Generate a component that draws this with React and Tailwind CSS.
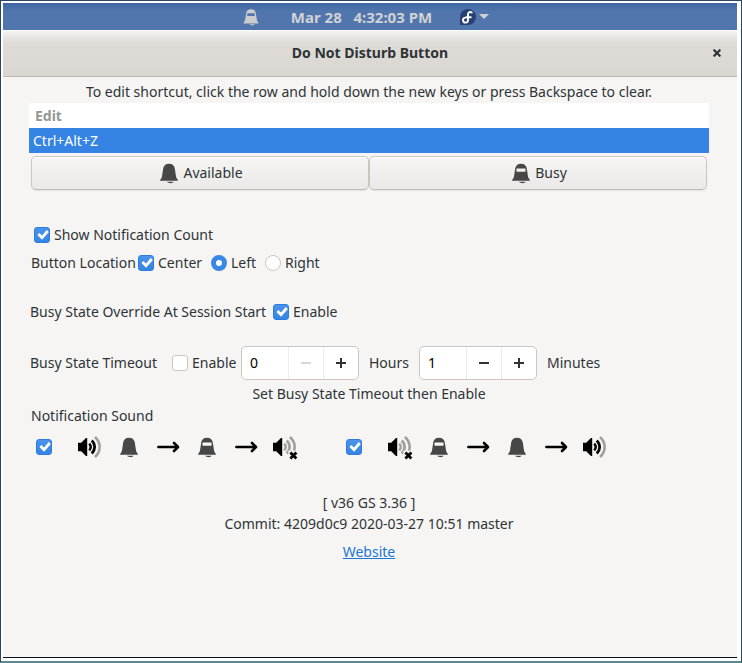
import { useState } from 'react';

function Bell({ busy = false, className = 'size-6 text-[#474747]' }) {
  return (
    <svg viewBox="0 0 24 24" className={className + ' shrink-0'} fill="currentColor" aria-hidden="true">
      <path
        fillRule="evenodd"
        d={
          'M12 2.8C8.6 2.8 6.8 4.6 6.2 7.6L5 15.4C4.7 17 3.2 18.2 3 19.8H21C20.8 18.2 19.3 17 19 15.4L17.8 7.6C17.2 4.6 15.4 2.8 12 2.8Z' +
          (busy ? 'M8.2 7.4H15.8C16.3 7.4 16.6 7.7 16.6 8.1V10C16.6 10.4 16.3 10.7 15.8 10.7H8.2C7.7 10.7 7.4 10.4 7.4 10V8.1C7.4 7.7 7.7 7.4 8.2 7.4Z' : '')
        }
      />
      <path d="M9.8 20.8H16.6C16 21.7 15.2 22.2 14 22.2C12.2 22.2 10.6 21.7 9.8 20.8Z" />
    </svg>
  );
}

function Arrow() {
  return (
    <svg viewBox="0 0 24 24" className="size-6 shrink-0" fill="none" stroke="#000" strokeWidth="2.6" aria-hidden="true">
      <path d="M2.4 12H21" strokeLinecap="round" />
      <path d="M18 8L22 12L18 16" strokeLinecap="round" strokeLinejoin="round" />
    </svg>
  );
}

function Speaker({ muted = false }) {
  const near = muted ? '#9f9f9f' : '#000';
  return (
    <svg viewBox="0 0 24 24" className="size-6 shrink-0 overflow-visible" fill="none" aria-hidden="true">
      <path d="M0 7.8H3.2L8 3H9.2V21H8L3.2 16.2H0Z" fill="#000" />
      <path d="M11.2 8.6C13 10.6 13 13.4 11.2 15.4" stroke={near} strokeWidth="2.4" />
      <path d="M13.8 5.6C17.6 9.4 17.6 14.6 13.8 18.4" stroke={near} strokeWidth="2.8" />
      <path d="M17 2C23.2 7.6 23.2 16.4 17 22" stroke="#9f9f9f" strokeWidth="2.6" />
      {muted && (
        <>
          <path d="M15.4 15.6H24.6V24H15.4Z" fill="#f6f5f4" />
          <path d="M17.4 17.4L23.4 23.4M23.4 17.4L17.4 23.4" stroke="#000" strokeWidth="2.8" />
        </>
      )}
    </svg>
  );
}

function Check({ className = '', ...props }) {
  return (
    <span className={'grid size-4 shrink-0 ' + className}>
      <input
        type="checkbox"
        className="peer col-start-1 row-start-1 size-4 appearance-none rounded-[3px] border border-[#cdc7c2] bg-white checked:border-[#2b7be0] checked:bg-linear-to-b checked:from-[#4a93ea] checked:to-[#3584e4]"
        {...props}
      />
      <svg viewBox="0 0 16 16" className="pointer-events-none col-start-1 row-start-1 hidden size-4 peer-checked:block" fill="none" stroke="#fff" strokeWidth="2.8" aria-hidden="true">
        <path d="M4.4 7L8 10.6L13.8 4" />
      </svg>
    </span>
  );
}

function Radio(props) {
  return (
    <input
      type="radio"
      name="location"
      className="size-4 shrink-0 appearance-none rounded-full border border-[#cdc7c2] bg-white checked:border-[5px] checked:border-[#3987e5]"
      {...props}
    />
  );
}

function Spin({ label, initial }) {
  const [value, setValue] = useState(initial);
  return (
    <div className="flex h-[34px] w-[118px] shrink-0 overflow-hidden rounded-[5px] border border-[#cdc7c2] bg-white text-[#2e3436]">
      <input
        aria-label={label}
        inputMode="numeric"
        value={value}
        onChange={(e) => setValue(Number(e.target.value) || 0)}
        className="min-w-0 flex-1 pl-2 text-black outline-none"
      />
      <button
        type="button"
        aria-label={'Decrease ' + label}
        disabled={value === 0}
        onClick={() => setValue(value - 1)}
        className="grid w-[35px] place-items-center border-l border-[#eeedec] disabled:text-[#d8d8d8]"
      >
        <svg viewBox="0 0 10 10" className="size-[10px]" fill="currentColor"><path d="M0 4H10V6H0Z" /></svg>
      </button>
      <button
        type="button"
        aria-label={'Increase ' + label}
        onClick={() => setValue(value + 1)}
        className="grid w-[35px] place-items-center border-l border-[#eeedec]"
      >
        <svg viewBox="0 0 10 10" className="size-[10px]" fill="currentColor"><path d="M4 0H6V4H10V6H6V10H4V6H0V4H4Z" /></svg>
      </button>
    </div>
  );
}

function TopBar() {
  return (
    <div className="flex h-[27px] items-center justify-center bg-linear-to-b from-[#3e66a4] via-[#5176ad] via-30% to-[#5176ad] pr-[10px] text-[#d0d2d4]">
      <Bell busy className="size-5 text-[#cccccc]" />
      <time className="ml-[30px] text-[15px] font-bold whitespace-pre">Mar 28   4:32:03 PM</time>
      <button type="button" aria-label="System menu" className="ml-7 flex items-center gap-[3px]">
        <svg viewBox="0 0 16 16" className="size-4" aria-hidden="true">
          <path d="M8 0A8 8 0 1 1 8 16H0V8A8 8 0 0 1 8 0Z" fill="#294172" />
          <path d="M5.2 8.6A2.5 2.5 0 1 0 8 11V5.2A2.4 2.4 0 0 1 11.8 3.4M6.4 8.2H10.8" fill="none" stroke="#fff" strokeWidth="1.9" strokeLinecap="round" />
        </svg>
        <svg viewBox="0 0 10 5" className="h-[5px] w-[10px]" fill="#ccd0d4" aria-hidden="true"><path d="M0 0H10L5 5Z" /></svg>
      </button>
    </div>
  );
}

const stateButton =
  'flex h-[34px] flex-1 items-center justify-center gap-[2px] rounded-[5px] border border-[#cdc7c2] border-b-[#bfb8b1] bg-linear-to-b from-[#f6f5f4] to-[#eae9e7] shadow-[0_1px_2px_rgba(0,0,0,0.07),inset_0_1px_0_#fff]';

export default function App() {
  return (
    <div className="flex min-h-screen flex-col border border-b-2 border-[#2a4560] border-b-[#5c8890] bg-white pt-[2px] pr-1 pb-[3px] pl-[2px] font-['Noto_Sans',sans-serif] text-sm leading-5 text-[#2e3436]">
      <TopBar />
      <header className="grid h-[47px] grid-cols-[40px_1fr_40px] items-center rounded-t-[3px] border-t border-b border-t-white border-b-[#bfb8b1] bg-linear-to-b from-[#f4f3f2] via-[#dfdcd8] via-25% to-[#dad6d2] pb-px">
        <h1 className="col-start-2 text-center font-bold">Do Not Disturb Button</h1>
        <button type="button" aria-label="Close" className="grid h-8 place-items-center">
          <svg viewBox="0 0 8 8" className="size-2" stroke="#2e3436" strokeWidth="2.2" aria-hidden="true"><path d="M0.6 0.6L7.4 7.4M7.4 0.6L0.6 7.4" /></svg>
        </button>
      </header>

      <main className="flex-1 border-b border-[#0a1420] bg-[#f6f5f4] pt-[5px] pr-7 pl-[26px]">
        <p className="text-center">To edit shortcut, click the row and hold down the new keys or press Backspace to clear.</p>

        <table className="mt-px w-full border-collapse bg-white text-left">
          <thead>
            <tr><th className="h-[25px] px-[6px] font-bold text-[#969696]">Edit</th></tr>
          </thead>
          <tbody>
            <tr><td className="h-[25px] bg-[#3584e4] px-1 text-white">Ctrl+Alt+Z</td></tr>
          </tbody>
        </table>

        <div className="mt-[3px] flex px-[2px]">
          <button type="button" className={stateButton}><Bell />Available</button>
          <button type="button" className={stateButton}><Bell busy />Busy</button>
        </div>

        <label className="mt-[35px] flex w-fit items-center gap-1 pl-[5px]">
          <Check defaultChecked />Show Notification Count
        </label>

        <div className="mt-2 flex items-center pl-[2px]">
          <span className="w-[107px]">Button Location</span>
          <label className="flex w-[73px] items-center gap-1"><Check defaultChecked />Center</label>
          <label className="flex w-[54px] items-center gap-1"><Radio defaultChecked />Left</label>
          <label className="flex items-center gap-1"><Radio />Right</label>
        </div>

        <div className="mt-[29px] flex items-center pl-px">
          <span className="w-[243px]">Busy State Override At Session Start</span>
          <label className="flex items-center gap-1"><Check defaultChecked />Enable</label>
        </div>

        <div className="mt-6 flex items-center pl-px">
          <span className="w-[142px]">Busy State Timeout</span>
          <label className="flex w-[69px] items-center gap-1"><Check />Enable</label>
          <Spin label="Hours" initial={0} />
          <span className="w-[60px] px-[10px]">Hours</span>
          <Spin label="Minutes" initial={1} />
          <span className="px-[10px]">Minutes</span>
        </div>
        <p className="mt-1 text-center">Set Busy State Timeout then Enable</p>

        <p className="mt-[2px] pl-[2px]">Notification Sound</p>
        <div className="mt-[9px] flex pl-[7px]">
          <div className="flex w-[310px] items-center gap-[15px]">
            <Check className="mr-[11px]" defaultChecked aria-label="Mute sound when busy" />
            <Speaker /><Bell /><Arrow /><Bell busy /><Arrow /><Speaker muted />
          </div>
          <div className="flex items-center gap-[15px]">
            <Check className="mr-[11px]" defaultChecked aria-label="Restore sound when available" />
            <Speaker muted /><Bell busy /><Arrow /><Bell /><Arrow /><Speaker />
          </div>
        </div>

        <footer className="mt-[33px] text-center leading-[21px]">
          <p>[ v36 GS 3.36 ]</p>
          <p>Commit: 4209d0c9 2020-03-27 10:51 master</p>
          <p className="mt-[7px]"><a href="#website" className="text-[#1b76d8] underline">Website</a></p>
        </footer>
      </main>
    </div>
  );
}
